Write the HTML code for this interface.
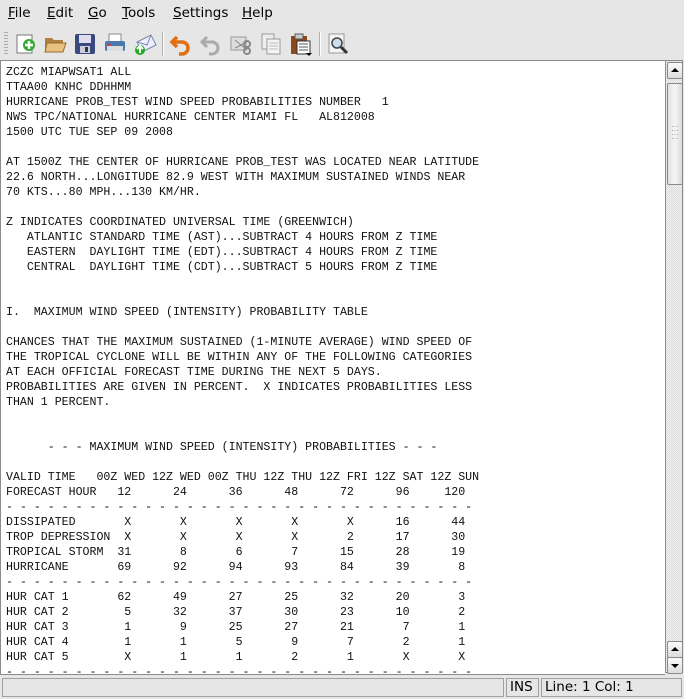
<!DOCTYPE html>
<html><head><meta charset="utf-8"><style>
body{margin:0;width:684px;height:699px;background:#e6e6e6;font-family:"DejaVu Sans","Liberation Sans",sans-serif;position:relative;overflow:hidden}
.menu{position:absolute;top:0;left:0;height:27px;font-size:13.5px;color:#000}
.menu span{position:absolute;top:5px}
.menu u{text-decoration:underline}
.tb{position:absolute;top:27px;left:0;width:684px;height:33px}
.ic{position:absolute;top:5px;width:24px;height:24px}
.sep{position:absolute;top:5px;width:1px;height:24px;background:#b0b0b0;border-right:1px solid #fff}
.ta{position:absolute;left:0;top:60px;width:664px;height:613px;background:#fff;border:1px solid #8c8c8c;border-right:none;overflow:hidden}
pre{margin:0;position:absolute;left:5px;top:4px;font-family:"Liberation Mono",monospace;font-size:11.6px;line-height:15px;color:#111}
.sb{position:absolute;left:665px;top:60px;width:18px;height:613px;background:repeating-conic-gradient(#d8d8d8 0 25%,#f4f4f4 0 50%) 0 0/2px 2px;border:1px solid #8c8c8c;box-sizing:border-box}
.btn{position:absolute;left:1px;width:14px;height:15px;background:linear-gradient(#fafafa,#dcdcdc);border:1px solid #8a8a8a;border-radius:2px}
.thumb{position:absolute;left:1px;top:22px;width:14px;height:100px;background:linear-gradient(90deg,#e0e0e0,#f6f6f6,#dadada);border:1px solid #8a8a8a;border-radius:2px}
.st{position:absolute;top:678px;height:19px;border:1px solid #a0a0a0;box-sizing:border-box;font-size:13.5px;line-height:17px;padding-left:3px}
</style></head><body>
<div class="menu">
<span style="left:8px"><u>F</u>ile</span>
<span style="left:47px"><u>E</u>dit</span>
<span style="left:88px"><u>G</u>o</span>
<span style="left:122px"><u>T</u>ools</span>
<span style="left:173px"><u>S</u>ettings</span>
<span style="left:242px"><u>H</u>elp</span>
</div>
<div class="tb">
<div style="position:absolute;left:4px;top:5px;width:4px;height:24px;background:repeating-linear-gradient(#aaa 0 1px,transparent 1px 3px)"></div>
<svg class="ic" style="left:14px" viewBox="0 0 24 24"><rect x="3" y="3" width="15" height="18" fill="#fff" stroke="#777"/><circle cx="15" cy="13" r="6" fill="#3a3"/><path d="M15 9v8M11 13h8" stroke="#fff" stroke-width="2.5"/></svg>
<svg class="ic" style="left:43px" viewBox="0 0 24 24"><path d="M2 6h7l2 2h9v12H2z" fill="#b08040"/><path d="M4 11h19l-3 9H2z" fill="#e8c080" stroke="#9a6a30"/></svg>
<svg class="ic" style="left:73px" viewBox="0 0 24 24"><rect x="2" y="2" width="20" height="20" rx="2" fill="#3a4a80"/><rect x="6" y="3" width="12" height="8" fill="#dde"/><rect x="7" y="14" width="10" height="7" fill="#ccd"/><rect x="12" y="15" width="3" height="5" fill="#334"/></svg>
<svg class="ic" style="left:103px" viewBox="0 0 24 24"><rect x="6" y="2" width="12" height="8" fill="#fff" stroke="#888"/><rect x="2" y="9" width="20" height="10" rx="2" fill="#4a7ab0"/><rect x="4" y="14" width="16" height="5" fill="#ddd"/><rect x="5" y="12" width="3" height="1.5" fill="#e33"/></svg>
<svg class="ic" style="left:133px" viewBox="0 0 24 24"><path d="M4 10l14-7 5 10-14 7z" fill="#eef" stroke="#78a"/><path d="M4 10l10 3 4-10" fill="none" stroke="#78a"/><circle cx="7" cy="18" r="5" fill="#2a2"/><path d="M7 21v-6M4 17l3-3 3 3" stroke="#fff" stroke-width="2" fill="none"/></svg>
<div class="sep" style="left:162px"></div>
<svg class="ic" style="left:169px" viewBox="0 0 24 24"><path d="M8 5L3 10l5 5" fill="none" stroke="#e07010" stroke-width="3.5"/><path d="M4 10h9a6 6 0 0 1 0 12h-3" fill="none" stroke="#e07010" stroke-width="3.5"/></svg>
<svg class="ic" style="left:199px" viewBox="0 0 24 24"><path d="M8 5L3 10l5 5" fill="none" stroke="#aaa" stroke-width="3"/><path d="M4 10h9a6 6 0 0 1 0 12h-3" fill="none" stroke="#aaa" stroke-width="3"/></svg>
<svg class="ic" style="left:229px" viewBox="0 0 24 24"><rect x="2" y="5" width="15" height="13" fill="#ddd" stroke="#999"/><circle cx="18" cy="12" r="3" fill="none" stroke="#888" stroke-width="2"/><circle cx="18" cy="19" r="3" fill="none" stroke="#888" stroke-width="2"/><path d="M6 8l12 10M6 16l12-6" stroke="#888"/></svg>
<svg class="ic" style="left:259px" viewBox="0 0 24 24"><rect x="3" y="2" width="12" height="15" fill="#eee" stroke="#999"/><rect x="8" y="7" width="13" height="15" fill="#f4f4f4" stroke="#999"/><path d="M10 11h9M10 14h9M10 17h9" stroke="#bbb"/></svg>
<svg class="ic" style="left:289px" viewBox="0 0 24 24"><rect x="2" y="4" width="16" height="18" fill="#8a4a1a"/><rect x="6" y="2" width="8" height="5" fill="#ccc" stroke="#555"/><rect x="8" y="9" width="13" height="13" fill="#fff" stroke="#333"/><path d="M10 12h9M10 15h9M10 18h9" stroke="#555"/><path d="M17 21h6l-3 3z" fill="#000"/></svg>
<div class="sep" style="left:319px"></div>
<svg class="ic" style="left:326px" viewBox="0 0 24 24"><rect x="3" y="2" width="15" height="19" fill="#f4f4f4" stroke="#999"/><circle cx="11" cy="11" r="5" fill="#cde" stroke="#444" stroke-width="1.5"/><path d="M15 15l6 6" stroke="#333" stroke-width="3"/></svg>
</div>
<div class="ta"><pre>ZCZC MIAPWSAT1 ALL
TTAA00 KNHC DDHHMM
HURRICANE PROB_TEST WIND SPEED PROBABILITIES NUMBER   1
NWS TPC/NATIONAL HURRICANE CENTER MIAMI FL   AL812008
1500 UTC TUE SEP 09 2008

AT 1500Z THE CENTER OF HURRICANE PROB_TEST WAS LOCATED NEAR LATITUDE
22.6 NORTH...LONGITUDE 82.9 WEST WITH MAXIMUM SUSTAINED WINDS NEAR
70 KTS...80 MPH...130 KM/HR.

Z INDICATES COORDINATED UNIVERSAL TIME (GREENWICH)
   ATLANTIC STANDARD TIME (AST)...SUBTRACT 4 HOURS FROM Z TIME
   EASTERN  DAYLIGHT TIME (EDT)...SUBTRACT 4 HOURS FROM Z TIME
   CENTRAL  DAYLIGHT TIME (CDT)...SUBTRACT 5 HOURS FROM Z TIME


I.  MAXIMUM WIND SPEED (INTENSITY) PROBABILITY TABLE

CHANCES THAT THE MAXIMUM SUSTAINED (1-MINUTE AVERAGE) WIND SPEED OF
THE TROPICAL CYCLONE WILL BE WITHIN ANY OF THE FOLLOWING CATEGORIES
AT EACH OFFICIAL FORECAST TIME DURING THE NEXT 5 DAYS.
PROBABILITIES ARE GIVEN IN PERCENT.  X INDICATES PROBABILITIES LESS
THAN 1 PERCENT.


      - - - MAXIMUM WIND SPEED (INTENSITY) PROBABILITIES - - -

VALID TIME   00Z WED 12Z WED 00Z THU 12Z THU 12Z FRI 12Z SAT 12Z SUN
FORECAST HOUR   12      24      36      48      72      96     120
- - - - - - - - - - - - - - - - - - - - - - - - - - - - - - - - - -
DISSIPATED       X       X       X       X       X      16      44
TROP DEPRESSION  X       X       X       X       2      17      30
TROPICAL STORM  31       8       6       7      15      28      19
HURRICANE       69      92      94      93      84      39       8
- - - - - - - - - - - - - - - - - - - - - - - - - - - - - - - - - -
HUR CAT 1       62      49      27      25      32      20       3
HUR CAT 2        5      32      37      30      23      10       2
HUR CAT 3        1       9      25      27      21       7       1
HUR CAT 4        1       1       5       9       7       2       1
HUR CAT 5        X       1       1       2       1       X       X
- - - - - - - - - - - - - - - - - - - - - - - - - - - - - - - - - -</pre></div>
<div class="sb">
<div class="btn" style="top:1px"><div style="position:absolute;left:3px;top:5px;border:4px solid transparent;border-bottom:4px solid #000;border-top:none"></div></div>
<div class="thumb"><div style="position:absolute;left:4px;top:42px;width:6px;height:16px;background:repeating-linear-gradient(90deg,#aaa 0 1px,transparent 1px 2.5px);-webkit-mask:repeating-linear-gradient(#000 0 1px,transparent 1px 4px)"></div></div>
<div class="btn" style="top:580px"><div style="position:absolute;left:3px;top:5px;border:4px solid transparent;border-bottom:4px solid #000;border-top:none"></div></div>
<div class="btn" style="top:596px"><div style="position:absolute;left:3px;top:6px;border:4px solid transparent;border-top:4px solid #000;border-bottom:none"></div></div>
</div>
<div class="st" style="left:2px;width:502px"></div>
<div class="st" style="left:506px;width:33px">INS</div>
<div class="st" style="left:541px;width:141px">Line: 1 Col: 1</div>
</body></html>
